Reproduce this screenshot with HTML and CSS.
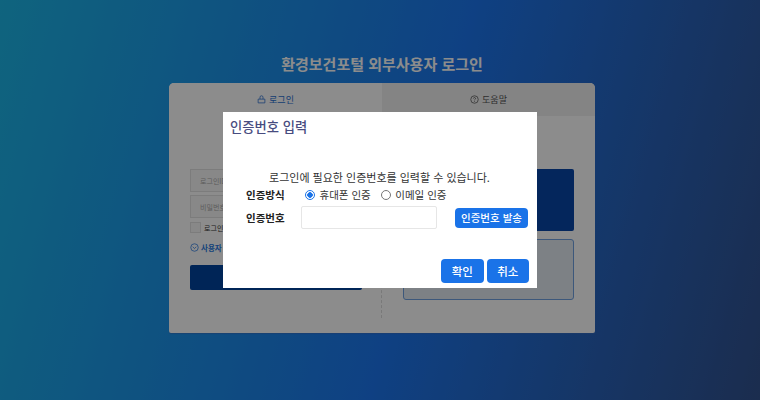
FILE: index.html
```html
<!DOCTYPE html>
<html lang="ko">
<head>
    <meta charset="UTF-8">
    <meta name="viewport" content="width=device-width, initial-scale=1.0">
    <title>환경보건포털 외부사용자 로그인</title>
    <link rel="stylesheet" href="styles.css">
</head>
<body>
    <div class="page">
        <h1 class="page-title">환경보건포털 외부사용자 로그인</h1>
        <div class="login-card">
            <div class="tabs">
                <div class="tab active">
                    <svg class="tab-icon" viewBox="0 0 12 12"><path d="M1.5 5.5h9v5h-9zM4 5.5V3a2 2 0 0 1 4 0v2.5" fill="none" stroke="currentColor"/></svg>
                    로그인
                </div>
                <div class="tab">
                    <svg class="tab-icon" viewBox="0 0 12 12"><circle cx="6" cy="6" r="5" fill="none" stroke="currentColor"/><path d="M4.6 4.7a1.4 1.4 0 1 1 2 1.3c-.4.2-.6.5-.6 1" fill="none" stroke="currentColor"/><path d="M6 8.2v1" stroke="currentColor"/></svg>
                    도움말
                </div>
            </div>
            <div class="panels">
                <div class="panel-left">
                    <p class="panel-heading">환경보건포털 로그인</p>
                    <input class="field" type="text" placeholder="로그인ID">
                    <input class="field" type="password" placeholder="비밀번호">
                    <label class="remember"><span class="check"></span>로그인 ID 저장</label>
                    <div class="register">
                        <svg class="register-icon" viewBox="0 0 12 12"><circle cx="6" cy="6" r="5" fill="none" stroke="currentColor"/><path d="M3.6 5l2.4 2.4L8.4 5" fill="none" stroke="currentColor"/></svg>
                        사용자 등록
                    </div>
                    <button class="login-btn" type="button">로그인</button>
                </div>
                <div class="panel-right">
                    <div class="box-solid"></div>
                    <div class="box-outline"></div>
                </div>
            </div>
        </div>
    </div>

    <div class="overlay">
        <div class="modal">
            <h2 class="modal-title">인증번호 입력</h2>
            <p class="modal-msg">로그인에 필요한 인증번호를 입력할 수 있습니다.</p>
            <div class="modal-row method-row">
                <span class="row-label">인증방식</span>
                <label class="radio"><span class="radio-dot on"></span>휴대폰 인증</label>
                <label class="radio"><span class="radio-dot"></span>이메일 인증</label>
            </div>
            <div class="modal-row code-row">
                <span class="row-label">인증번호</span>
                <input class="code-input" type="text">
                <button class="btn btn-send" type="button">인증번호 발송</button>
            </div>
            <div class="modal-actions">
                <button class="btn btn-action" type="button">확인</button>
                <button class="btn btn-action" type="button">취소</button>
            </div>
        </div>
    </div>
</body>
</html>
```

FILE: styles.css
```css
* {
    box-sizing: border-box;
}
html, body {
    height: 100%;
}
body {
    margin: 0;
    font-family: "Noto Sans CJK KR", "Noto Sans", sans-serif;
    overflow: hidden;
}
.page {
    height: 400px;
    padding: 52px 0 0 4px;
    background: linear-gradient(105deg, #1cb6e6 0%, #1c76ee 55%, #32528f 100%);
}
.page-title {
    margin: 0 0 8px;
    height: 23px;
    line-height: 23px;
    font-size: 15px;
    font-weight: 700;
    color: #fff;
    text-align: center;
}
.login-card {
    width: 426px;
    height: 250px;
    margin: 0 auto;
    background: #fff;
    border-radius: 5px 5px 2px 2px;
    box-shadow: 0 1px 1px rgba(60, 110, 190, 0.6);
    overflow: hidden;
}
.tabs {
    display: flex;
    height: 33px;
}
.tab {
    flex: 1;
    display: flex;
    align-items: center;
    justify-content: center;
    gap: 3px;
    font-size: 9px;
    color: #555;
    background: #f0f0f0;
}
.tab.active {
    color: #2a6fd0;
    background: #fff;
}
.tab-icon {
    width: 9px;
    height: 9px;
}
.panels {
    display: flex;
    height: 202px;
}
.panel-left {
    width: 213px;
    padding: 21px 21px 0;
    border-right: 1px dashed #ddd;
}
.panel-heading {
    margin: 0 0 18px;
    height: 14px;
    font-size: 11px;
    line-height: 14px;
    text-align: center;
    color: #333;
}
.field {
    display: block;
    width: 172px;
    height: 23px;
    margin-bottom: 3px;
    padding: 0 9px;
    border: 1px solid #e2e2e2;
    background: #f8f8f8;
    font-family: inherit;
    font-size: 7px;
}
.field::placeholder {
    color: #aaa;
}
.remember {
    display: flex;
    align-items: center;
    gap: 3px;
    height: 11px;
    margin-top: 4px;
    font-size: 7px;
    color: #333;
}
.check {
    width: 11px;
    height: 11px;
    border: 1px solid #e2e2e2;
    background: #f8f8f8;
}
.register {
    display: flex;
    align-items: center;
    gap: 2px;
    height: 10px;
    margin: 9px 0 13px;
    font-size: 7.5px;
    font-weight: 700;
    color: #2a7ae0;
}
.register-icon {
    width: 9px;
    height: 9px;
}
.login-btn {
    display: block;
    width: 172px;
    height: 25px;
    border: none;
    border-radius: 2px;
    color: #fff;
    background: #00449e;
}
.panel-right {
    flex: 1;
    padding: 53px 21px 0;
}
.box-solid {
    height: 62px;
    margin-bottom: 8px;
    background: #0845a8;
    border-radius: 2px;
}
.box-outline {
    height: 61px;
    background: #e3ecf3;
    border: 1px solid #6fa0e0;
    border-radius: 3px;
}

.overlay {
    position: fixed;
    top: 0;
    left: 0;
    right: 0;
    bottom: 0;
    display: flex;
    align-items: center;
    justify-content: center;
    background: rgba(0, 0, 0, 0.45);
}
.modal {
    width: 314px;
    height: 176px;
    padding: 6px 8px 5px 7px;
    background: #fff;
    display: flex;
    flex-direction: column;
}
.modal-title {
    margin: 0;
    height: 18px;
    line-height: 18px;
    font-size: 13.3px;
    font-weight: 500;
    color: #484c80;
}
.modal-msg {
    margin: 33px 0 0;
    height: 17px;
    line-height: 17px;
    font-size: 11px;
    text-align: center;
    color: #333;
}
.modal-row {
    display: flex;
    align-items: center;
}
.method-row {
    height: 17px;
}
.row-label {
    width: 71px;
    padding-left: 16px;
    flex: none;
    font-size: 10.5px;
    font-weight: 700;
    color: #222;
}
.method-row .radio:first-of-type {
    margin-left: 4px;
}
.radio {
    display: flex;
    align-items: center;
    gap: 4.5px;
    margin-right: 10px;
    font-size: 10.5px;
    color: #333;
}
.radio-dot {
    width: 10px;
    height: 10px;
    border: 1px solid #767676;
    border-radius: 50%;
    background: #fff;
}
.radio-dot.on {
    border: 1.5px solid #1a73e8;
    background: radial-gradient(circle, #1a73e8 2.5px, #fff 3px);
}
.code-row {
    height: 23px;
    margin-top: 3px;
}
.code-input {
    width: 136px;
    height: 23px;
    border: 1px solid #e6e6e6;
    border-radius: 2px;
}
.btn {
    border: none;
    color: #fff;
    background: #1a73e8;
    border-radius: 4px;
    font-family: inherit;
    padding: 0;
}
.btn-send {
    width: 73px;
    height: 20px;
    margin-left: 18px;
    font-size: 10.5px;
    font-weight: 500;
}
.modal-actions {
    display: flex;
    justify-content: flex-end;
    gap: 3px;
    margin-top: auto;
}
.btn-action {
    width: 42.5px;
    height: 24px;
    font-size: 11.5px;
    font-weight: 500;
}
```
